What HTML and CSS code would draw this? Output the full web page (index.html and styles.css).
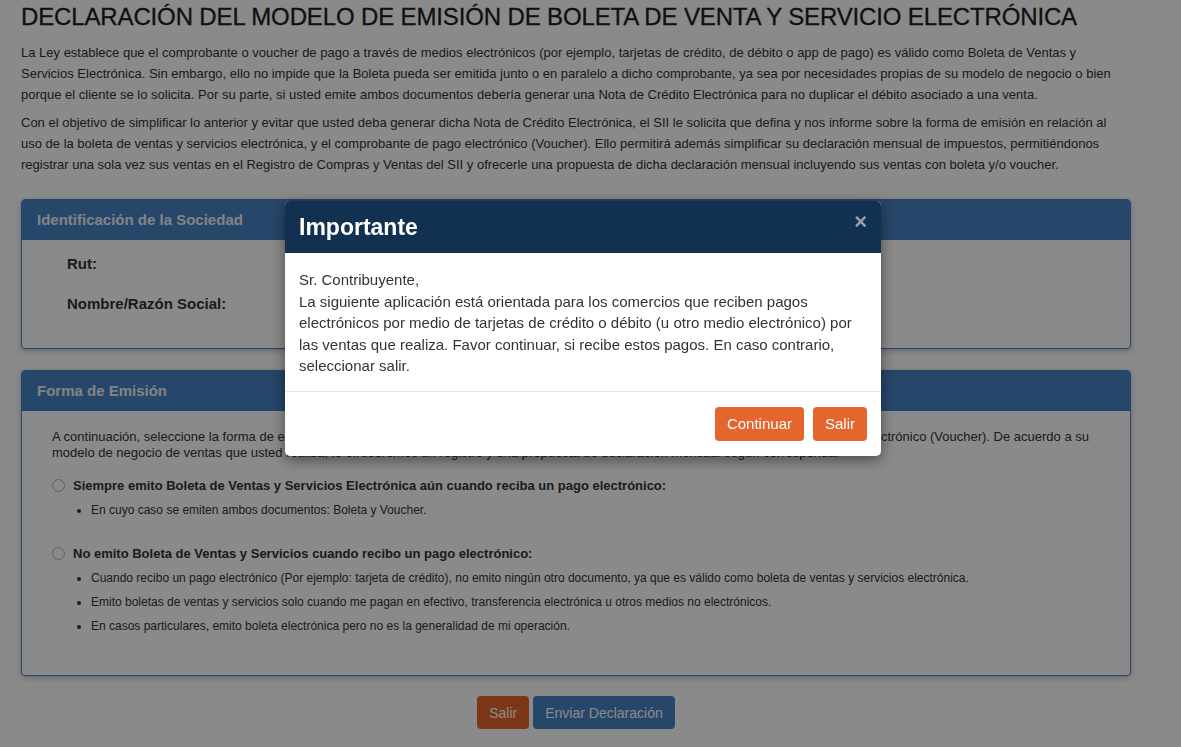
FILE: index.html
```html
<!DOCTYPE html>
<html lang="es">
<head>
    <meta charset="UTF-8">
    <meta name="viewport" content="width=device-width, initial-scale=1.0">
    <title>Declaración del modelo de emisión</title>
    <link rel="stylesheet" href="styles.css">
</head>
<body>
    <div class="page">
        <h1>DECLARACIÓN DEL MODELO DE EMISIÓN DE BOLETA DE VENTA Y SERVICIO ELECTRÓNICA</h1>
        <p>La Ley establece que el comprobante o voucher de pago a través de medios electrónicos (por ejemplo, tarjetas de crédito, de débito o app de pago) es válido como Boleta de Ventas y Servicios Electrónica. Sin embargo, ello no impide que la Boleta pueda ser emitida junto o en paralelo a dicho comprobante, ya sea por necesidades propias de su modelo de negocio o bien porque el cliente se lo solicita. Por su parte, si usted emite ambos documentos debería generar una Nota de Crédito Electrónica para no duplicar el débito asociado a una venta.</p>
        <p>Con el objetivo de simplificar lo anterior y evitar que usted deba generar dicha Nota de Crédito Electrónica, el SII le solicita que defina y nos informe sobre la forma de emisión en relación al uso de la boleta de ventas y servicios electrónica, y el comprobante de pago electrónico (Voucher). Ello permitirá además simplificar su declaración mensual de impuestos, permitiéndonos registrar una sola vez sus ventas en el Registro de Compras y Ventas del SII y ofrecerle una propuesta de dicha declaración mensual incluyendo sus ventas con boleta y/o voucher.</p>

        <div class="panel">
            <div class="panel-heading">Identificación de la Sociedad</div>
            <div class="panel-body datos">
                <div class="dato"><span class="etiqueta">Rut:</span></div>
                <div class="dato"><span class="etiqueta">Nombre/Razón Social:</span></div>
            </div>
        </div>

        <div class="panel">
            <div class="panel-heading">Forma de Emisión</div>
            <div class="panel-body forma">
                <p class="intro">A continuación, seleccione la forma de emisión que utiliza en relación a la boleta de ventas y servicios electrónica y al comprobante de pago electrónico (Voucher). De acuerdo a su modelo de negocio de ventas que usted realiza, le ofreceremos un registro y una propuesta de declaración mensual según corresponda.</p>

                <label class="opcion"><input type="radio" name="forma"> Siempre emito Boleta de Ventas y Servicios Electrónica aún cuando reciba un pago electrónico:</label>
                <ul>
                    <li>En cuyo caso se emiten ambos documentos: Boleta y Voucher.</li>
                </ul>

                <label class="opcion"><input type="radio" name="forma"> No emito Boleta de Ventas y Servicios cuando recibo un pago electrónico:</label>
                <ul>
                    <li>Cuando recibo un pago electrónico (Por ejemplo: tarjeta de crédito), no emito ningún otro documento, ya que es válido como boleta de ventas y servicios electrónica.</li>
                    <li>Emito boletas de ventas y servicios solo cuando me pagan en efectivo, transferencia electrónica u otros medios no electrónicos.</li>
                    <li>En casos particulares, emito boleta electrónica pero no es la generalidad de mi operación.</li>
                </ul>
            </div>
        </div>

        <div class="acciones">
            <button type="button" class="btn btn-naranja">Salir</button>
            <button type="button" class="btn btn-azul">Enviar Declaración</button>
        </div>
    </div>

    <div class="backdrop"></div>
    <div class="modal">
        <div class="modal-header">
            <h2>Importante</h2>
            <span class="cerrar">&times;</span>
        </div>
        <div class="modal-body">
            Sr. Contribuyente,<br>
            La siguiente aplicación está orientada para los comercios que reciben pagos electrónicos por medio de tarjetas de crédito o débito (u otro medio electrónico) por las ventas que realiza. Favor continuar, si recibe estos pagos. En caso contrario, seleccionar salir.
        </div>
        <div class="modal-footer">
            <button type="button" class="btn btn-naranja grande">Continuar</button>
            <button type="button" class="btn btn-naranja grande">Salir</button>
        </div>
    </div>
</body>
</html>
```

FILE: styles.css
```css
body { margin: 0; background-color: #fff; color: #333; font-family: "Liberation Sans", Arial, sans-serif; font-size: 13px; }
.page { width: 1110px; padding: 0 0 20px 21px; }
h1 { margin: 0; font-size: 24px; font-weight: normal; line-height: 34px; color: #1e1e1e; letter-spacing: -0.14px; -webkit-text-stroke: 0.3px #1e1e1e; }
p { margin: 7px 10px 0 0; line-height: 21px; }
h1 + p { margin-top: 8px; }

.panel { border: 1px solid #4682c4; border-radius: 4px; box-shadow: 0 2px 6px rgba(0, 0, 0, 0.25); }
.panel + .panel { margin-top: 21px; }
p + .panel { margin-top: 24px; }
.panel-heading { background-color: #4682c4; color: #eef2f6; font-weight: bold; font-size: 15px; height: 40px; line-height: 40px; padding: 0 15px; border-radius: 3px 3px 0 0; }

.datos { padding: 11px 0 17px 45px; }
.dato { height: 40px; line-height: 26px; }
.etiqueta { font-weight: bold; font-size: 15px; }

.forma { padding: 18px 30px 37px 30px; }
.forma .intro { margin: 0 0 15px; line-height: 16px; }
.opcion { display: flex; align-items: center; font-weight: bold; height: 18px; }
.opcion input { appearance: none; -webkit-appearance: none; margin: 0 8px 0 0; width: 13px; height: 13px; border: 1px solid #b5b5b5; border-radius: 50%; background: #fff; }
ul { margin: 4px 0 22px; padding-left: 39px; font-size: 12px; }
li { line-height: 24px; }
ul:last-child { margin-bottom: 0; }

.acciones { display: flex; justify-content: center; gap: 4px; margin-top: 20px; }
.btn { border: none; border-radius: 4px; color: #fff; font-family: inherit; font-size: 14px; height: 33px; padding: 0 12px; cursor: pointer; }
.btn-naranja { background-color: #e4652d; }
.btn-azul { background-color: #4682c4; }

.backdrop { position: fixed; top: 0; left: 0; right: 0; bottom: 0; background-color: rgba(0, 0, 0, 0.46); }
.modal { position: fixed; top: 201px; left: 285px; width: 596px; background: #fff; border-radius: 5px; overflow: hidden; box-shadow: 0 4px 14px rgba(0, 0, 0, 0.45); }
.modal-header { background-color: #12304f; height: 52px; display: flex; align-items: center; justify-content: space-between; padding: 0 14px; }
.modal-header h2 { margin: 0; color: #fff; font-size: 23px; font-weight: bold; }
.cerrar { color: #fff; opacity: 0.55; font-size: 22px; font-weight: bold; line-height: 1; margin-top: -10px; }
.modal-body { padding: 16px 14px 14px; font-size: 15px; line-height: 21.5px; color: #333; border-bottom: 1px solid #e5e5e5; }
.modal-footer { display: flex; justify-content: flex-end; gap: 9px; padding: 15px 14px; }
.grande { height: 34px; font-size: 15px; }
```
